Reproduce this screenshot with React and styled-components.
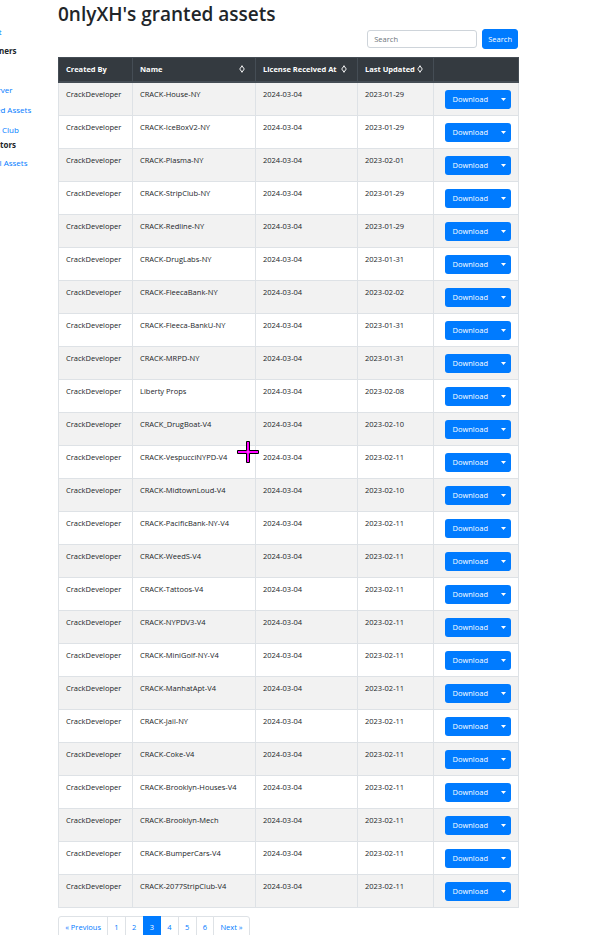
import React from "react";
import styled, { createGlobalStyle } from "styled-components";

const Global = createGlobalStyle`
  html, body { margin: 0; padding: 0; background: #fff; }
  body { font-family: "Open Sans", "Noto Sans", sans-serif; color: #212529; overflow: hidden; }
  * { box-sizing: border-box; }
`;

const Page = styled.div`
  display: flex;
  align-items: flex-start;
  width: 609px;
  height: 935px;
  overflow: hidden;
  position: relative;
`;

const Sidebar = styled.nav`
  flex: 0 0 100px;
  margin-left: -42px;
  display: flex;
  flex-direction: column;
  padding-top: 25px;
  font-size: 8px;
  line-height: 12px;
  white-space: nowrap;
`;

const NavLink = styled.a`
  color: #007bff;
  text-decoration: none;
  margin-top: ${(p) => p.$gap || 8}px;
`;

const NavHeading = styled.div`
  font-weight: 700;
  color: #212529;
  margin-top: ${(p) => p.$gap || 7}px;
`;

const Main = styled.main`
  width: 460px;
  display: flex;
  flex-direction: column;
`;

const Title = styled.h1`
  margin: 2px 0 0;
  font-size: 19px;
  line-height: 24px;
  font-weight: 600;
  color: #212529;
`;

const SearchBar = styled.form`
  display: flex;
  justify-content: flex-end;
  align-items: center;
  gap: 5px;
  margin-top: 3px;
  height: 20px;
`;

const SearchInput = styled.input`
  width: 110px;
  height: 18px;
  border: 1px solid #ced4da;
  border-radius: 3px;
  padding: 0 6px;
  font-family: inherit;
  font-size: 7.5px;
  color: #495057;
  &::placeholder { color: #6c757d; }
`;

const Button = styled.button`
  background: #007bff;
  color: #fff;
  border: 1px solid #007bff;
  border-radius: 3px;
  font-family: inherit;
  font-size: 7.5px;
  line-height: 12px;
  padding: 3px 5px;
  display: inline-flex;
  align-items: center;
  justify-content: center;
`;

const Table = styled.table`
  margin-top: 8px;
  width: 460px;
  border-collapse: collapse;
  table-layout: fixed;
  font-size: 7.5px;
  line-height: 12px;
  border: 1px solid #dee2e6;
`;

const Th = styled.th`
  background: #343a40;
  color: #fff;
  font-weight: 700;
  text-align: left;
  padding: 0 7px;
  height: 24px;
  border: 1px solid #454d55;
  border-bottom-width: 2px;
  vertical-align: middle;
`;

const ThInner = styled.div`
  display: flex;
  align-items: center;
  justify-content: space-between;
  padding-right: 3px;
`;

const Tr = styled.tr`
  background: ${(p) => (p.$striped ? "#f2f2f2" : "#fff")};
`;

const Td = styled.td`
  padding: 5px 7px 8px;
  height: 32px;
  border: 1px solid #dee2e6;
  vertical-align: top;
  color: #212529;
  white-space: nowrap;
`;

const ActionTd = styled(Td)`
  padding: 7px 7px 6px;
`;

const Split = styled.div`
  display: flex;
  width: fit-content;
  margin-left: auto;
  border-radius: 3px;
  overflow: hidden;
  height: 19px;
`;

const SplitMain = styled(Button)`
  border-radius: 0;
  padding: 0 7px;
  height: 19px;
  border: none;
`;

const SplitToggle = styled(Button)`
  border-radius: 0;
  padding: 0;
  width: 16px;
  height: 19px;
  border: none;
`;

const Pagination = styled.ul`
  display: flex;
  list-style: none;
  margin: 8px 0 0;
  padding: 0;
  font-size: 7.5px;
  line-height: 12px;
`;

const PageItem = styled.li`
  padding: 4px 6.2px;
  border: 1px solid #dee2e6;
  margin-left: -1px;
  color: ${(p) => (p.$active ? "#fff" : "#007bff")};
  background: ${(p) => (p.$active ? "#007bff" : "#fff")};
  border-color: ${(p) => (p.$active ? "#007bff" : "#dee2e6")};
  position: relative;
  z-index: ${(p) => (p.$active ? 1 : 0)};
  &:first-child { margin-left: 0; border-radius: 3px 0 0 3px; }
  &:last-child { border-radius: 0 3px 3px 0; }
`;

const Cursor = styled.svg`
  position: absolute;
  left: 236px;
  top: 440px;
  pointer-events: none;
`;

const SortIcon = () => (
  <svg width="6" height="8" viewBox="0 0 6 8">
    <path d="M3 1 L5 3.6 M3 1 L1 3.6 M3 7 L5 4.4 M3 7 L1 4.4" stroke="#fff" strokeWidth="1" fill="none" strokeLinecap="round" />
  </svg>
);

const Caret = () => (
  <svg width="5" height="3" viewBox="0 0 5 3">
    <path d="M0 0 L5 0 L2.5 3 Z" fill="#fff" />
  </svg>
);

const rows = [
  ["CRACK-House-NY", "2023-01-29"],
  ["CRACK-IceBoxV2-NY", "2023-01-29"],
  ["CRACK-Plasma-NY", "2023-02-01"],
  ["CRACK-StripClub-NY", "2023-01-29"],
  ["CRACK-Redline-NY", "2023-01-29"],
  ["CRACK-DrugLabs-NY", "2023-01-31"],
  ["CRACK-FleecaBank-NY", "2023-02-02"],
  ["CRACK-Fleeca-BankU-NY", "2023-01-31"],
  ["CRACK-MRPD-NY", "2023-01-31"],
  ["Liberty Props", "2023-02-08"],
  ["CRACK_DrugBoat-V4", "2023-02-10"],
  ["CRACK-VespucciNYPD-V4", "2023-02-11"],
  ["CRACK-MidtownLoud-V4", "2023-02-10"],
  ["CRACK-PacificBank-NY-V4", "2023-02-11"],
  ["CRACK-WeedS-V4", "2023-02-11"],
  ["CRACK-Tattoos-V4", "2023-02-11"],
  ["CRACK-NYPDV3-V4", "2023-02-11"],
  ["CRACK-MiniGolf-NY-V4", "2023-02-11"],
  ["CRACK-ManhatApt-V4", "2023-02-11"],
  ["CRACK-Jail-NY", "2023-02-11"],
  ["CRACK-Coke-V4", "2023-02-11"],
  ["CRACK-Brooklyn-Houses-V4", "2023-02-11"],
  ["CRACK-Brooklyn-Mech", "2023-02-11"],
  ["CRACK-BumperCars-V4", "2023-02-11"],
  ["CRACK-2077StripClub-V4", "2023-02-11"],
];

export default function App() {
  return (
    <>
      <Global />
      <Page>
        <Sidebar>
          <NavLink $gap={1}>My Account</NavLink>
          <NavHeading $gap={7}>Server Owners</NavHeading>
          <NavLink $gap={27}>Discord Server</NavLink>
          <NavLink $gap={8}>Downloaded Assets</NavLink>
          <NavLink $gap={8}>Investment Club</NavLink>
          <NavHeading $gap={3}>Asset Creators</NavHeading>
          <NavLink $gap={6}>View Global Assets</NavLink>
        </Sidebar>
        <Main>
          <Title>0nlyXH's granted assets</Title>
          <SearchBar onSubmit={(e) => e.preventDefault()}>
            <SearchInput placeholder="Search" />
            <Button type="submit">Search</Button>
          </SearchBar>
          <Table>
            <colgroup>
              <col style={{ width: 74 }} />
              <col style={{ width: 123 }} />
              <col style={{ width: 102 }} />
              <col style={{ width: 76 }} />
              <col style={{ width: 85 }} />
            </colgroup>
            <thead>
              <tr>
                <Th>Created By</Th>
                <Th><ThInner>Name <SortIcon /></ThInner></Th>
                <Th><ThInner>License Received At <SortIcon /></ThInner></Th>
                <Th><ThInner>Last Updated <SortIcon /></ThInner></Th>
                <Th />
              </tr>
            </thead>
            <tbody>
              {rows.map(([name, updated], i) => (
                <Tr key={name} $striped={i % 2 === 0}>
                  <Td>CrackDeveloper</Td>
                  <Td>{name}</Td>
                  <Td>2024-03-04</Td>
                  <Td>{updated}</Td>
                  <ActionTd>
                    <Split>
                      <SplitMain>Download</SplitMain>
                      <SplitToggle><Caret /></SplitToggle>
                    </Split>
                  </ActionTd>
                </Tr>
              ))}
            </tbody>
          </Table>
          <Pagination>
            <PageItem>« Previous</PageItem>
            <PageItem>1</PageItem>
            <PageItem>2</PageItem>
            <PageItem $active>3</PageItem>
            <PageItem>4</PageItem>
            <PageItem>5</PageItem>
            <PageItem>6</PageItem>
            <PageItem>Next »</PageItem>
          </Pagination>
        </Main>
        <Cursor width="24" height="24" viewBox="0 0 24 24">
          <path d="M10.5 1.5 h3 v9 h9 v3 h-9 v9 h-3 v-9 h-9 v-3 h9 z" fill="#ff00ff" stroke="#000" strokeWidth="1" />
          <rect x="11.5" y="11.5" width="1" height="1" fill="#fff" />
        </Cursor>
      </Page>
    </>
  );
}
